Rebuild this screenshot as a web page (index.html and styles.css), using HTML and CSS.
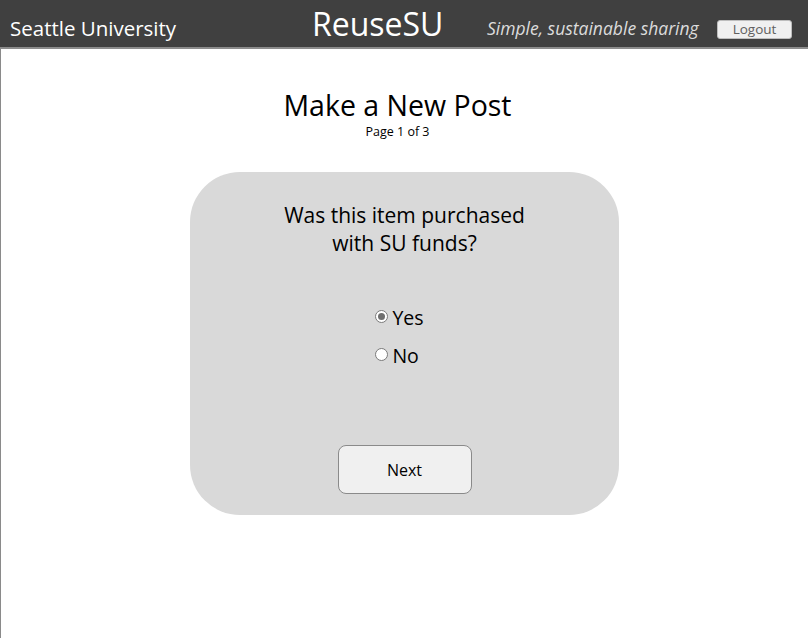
FILE: index.html
```html
<!DOCTYPE html>
<html>
<head>
<meta charset="utf-8">
<link rel="stylesheet" href="styles.css">
</head>
<body>
<div class="page">
  <header class="topbar">
    <div class="brand">Seattle University</div>
    <div class="logo">ReuseSU</div>
    <div class="tagline">Simple, sustainable sharing</div>
    <button class="logout">Logout</button>
  </header>
  <main class="content">
    <h1 class="title">Make a New Post</h1>
    <div class="pageno">Page 1 of 3</div>
    <section class="card">
      <div class="question">Was this item purchased<br>with SU funds?</div>
      <div class="options">
        <label class="option"><span class="radio checked"></span>Yes</label>
        <label class="option"><span class="radio"></span>No</label>
      </div>
      <button class="next">Next</button>
    </section>
  </main>
</div>
</body>
</html>
```

FILE: styles.css
```css
html, body {
  margin: 0;
  padding: 0;
  background: #fff;
}
body {
  font-family: "Open Sans", "Noto Sans", "DejaVu Sans", sans-serif;
  color: #000;
}
.page {
  min-height: 638px;
  border-left: 1px solid #8a8a8a;
  box-sizing: border-box;
}
.topbar {
  height: 47px;
  background: #404040;
  border-bottom: 2px solid #8c8c8c;
  display: flex;
  align-items: center;
  margin-left: -1px;
  color: #fff;
}
.brand {
  font-size: 20.5px;
  padding-left: 10px;
  width: 312px;
  box-sizing: border-box;
  padding-top: 8px;
  white-space: nowrap;
}
.logo {
  font-size: 32px;
  width: 175px;
  box-sizing: border-box;
  line-height: 1;
  margin-top: 0;
}
.tagline {
  font-style: italic;
  font-size: 17.5px;
  color: #dcdcdc;
  padding-top: 8px;
  width: 230px;
  white-space: nowrap;
}
.logout {
  margin-top: 11px;
  width: 75px;
  height: 19px;
  padding: 0;
  border: 1px solid #bdbdbd;
  border-radius: 3px;
  background: #f0f0f0;
  color: #606060;
  font-family: inherit;
  font-size: 13.5px;
  line-height: 17px;
}
.content {
  display: flex;
  flex-direction: column;
  align-items: center;
  padding-top: 37px;
}
.title {
  margin: 0 14px 0 0;
  font-weight: normal;
  font-size: 28.5px;
  line-height: 38px;
}
.pageno {
  font-size: 12.5px;
  line-height: 16px;
  margin-right: 14px;
}
.card {
  margin-top: 32px;
  width: 429px;
  height: 343px;
  background: #d9d9d9;
  border-radius: 50px;
  display: flex;
  flex-direction: column;
  align-items: center;
  box-sizing: border-box;
  padding-top: 29px;
}
.question {
  font-size: 21px;
  line-height: 28px;
  text-align: center;
}
.options {
  margin-top: 47px;
  display: flex;
  flex-direction: column;
  gap: 11px;
  margin-left: -10px;
}
.option {
  display: flex;
  align-items: center;
  font-size: 19.5px;
  line-height: 27px;
}
.radio {
  width: 13px;
  height: 13px;
  border: 1px solid #7a7a7a;
  border-radius: 50%;
  background: #fff;
  margin-right: 4px;
  margin-top: -3px;
  box-sizing: border-box;
  display: inline-flex;
  align-items: center;
  justify-content: center;
}
.radio.checked::after {
  content: "";
  width: 7px;
  height: 7px;
  border-radius: 50%;
  background: #6e6e6e;
}
.next {
  margin-top: 76px;
  width: 134px;
  height: 49px;
  background: #f0f0f0;
  border: 1px solid #8a8a8a;
  border-radius: 8px;
  font-family: inherit;
  font-size: 16px;
  color: #000;
  padding: 0;
}
```
